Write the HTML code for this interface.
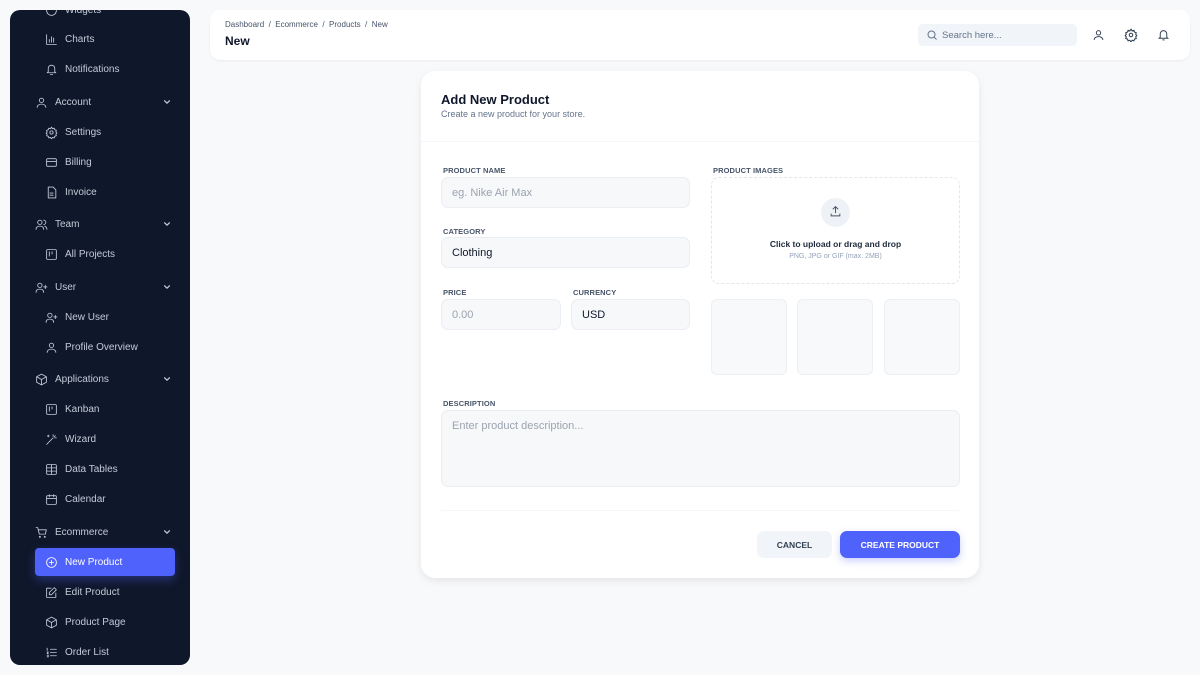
<!DOCTYPE html>
<html><head><style>
*{box-sizing:border-box;margin:0;padding:0}
body{width:1200px;height:675px;background:#f8f9fb;font-family:"Liberation Sans",sans-serif;position:relative;overflow:hidden}
.sb{position:absolute;left:10px;top:10px;width:180px;height:655px;background:#0f172a;border-radius:10px;overflow:hidden}
.it{position:absolute;height:26px;font-size:10px;color:#c3cbd8;display:flex;align-items:center}
.it svg{width:13px;height:13px;stroke:#c3cbd8;fill:none;stroke-width:1.6;stroke-linecap:round;stroke-linejoin:round;position:absolute;left:0}
.p{left:25px;width:140px}.p span{margin-left:20px}
.c{left:35px;width:140px}.c span{margin-left:20px}
.c svg{left:0}
.it svg.chev{left:auto;right:4px;width:8px;height:8px}
.act{background:#4f62fc;border-radius:4px;color:#fff;left:25px;width:140px;box-shadow:0 4px 10px rgba(79,98,252,.35)}
.act svg{left:10px;stroke:#fff}.act span{margin-left:30px}
.hd{position:absolute;left:210px;top:10px;width:980px;height:50px;background:#fff;border-radius:10px;box-shadow:0 1px 2px rgba(0,0,0,.06)}
.card{position:absolute;left:421px;top:71px;width:558px;height:507px;background:#fff;border-radius:14px;box-shadow:0 3px 8px rgba(0,0,0,.08)}
.lbl{position:absolute;font-size:7.5px;font-weight:bold;color:#475569;letter-spacing:.1px}
.inp{position:absolute;background:#f6f8fa;border:1px solid #eaedf2;border-radius:7px;font-size:11px;display:flex;align-items:center;padding-left:10px;color:#0f172a}
.ph{color:#9ca3af}
.th{position:absolute;width:76px;height:76px;background:#f8f9fb;border:1px solid #eceff3;border-radius:6px}
</style></head><body>
<div class="sb">
<div class="it c" style="top:-13px"><svg viewBox="0 0 24 24"><circle cx="12" cy="12" r="9"/></svg><span>Widgets</span></div>
<div class="it c" style="top:16px"><svg viewBox="0 0 24 24"><path d="M3 3v18h18M8 17v-5M12 17V7M16 17v-8"/></svg><span>Charts</span></div>
<div class="it c" style="top:46px"><svg viewBox="0 0 24 24"><path d="M6 16V10a6 6 0 0112 0v6l2 2H4zM10 21h4"/></svg><span>Notifications</span></div>
<div class="it p" style="top:79px"><svg viewBox="0 0 24 24"><circle cx="12" cy="8" r="4"/><path d="M4 21c0-4 4-6 8-6s8 2 8 6"/></svg><span>Account</span><svg class="chev" viewBox="0 0 10 10"><path d="M2 3.5l3 3 3-3"/></svg></div>
<div class="it c" style="top:109px"><svg viewBox="0 0 24 24"><circle cx="12" cy="12" r="3"/><path d="M12 2l2 3 3-1 1 3 3 1-1 3 2 2-2 2 1 3-3 1-1 3-3-1-2 3-2-3-3 1-1-3-3-1 1-3-2-2 2-2-1-3 3-1 1-3 3 1z"/></svg><span>Settings</span></div>
<div class="it c" style="top:139px"><svg viewBox="0 0 24 24"><rect x="3" y="5" width="18" height="14" rx="2"/><path d="M3 10h18"/></svg><span>Billing</span></div>
<div class="it c" style="top:169px"><svg viewBox="0 0 24 24"><path d="M6 2h9l5 5v15H6zM9 13h6M9 17h6"/></svg><span>Invoice</span></div>
<div class="it p" style="top:201px"><svg viewBox="0 0 24 24"><circle cx="9" cy="8" r="4"/><path d="M2 21c0-4 3-6 7-6s7 2 7 6M16 4a4 4 0 010 8M22 21c0-3-2-5-4-6"/></svg><span>Team</span><svg class="chev" viewBox="0 0 10 10"><path d="M2 3.5l3 3 3-3"/></svg></div>
<div class="it c" style="top:231px"><svg viewBox="0 0 24 24"><rect x="3" y="3" width="18" height="18" rx="2"/><path d="M8 7v8M13 7v4"/></svg><span>All Projects</span></div>
<div class="it p" style="top:264px"><svg viewBox="0 0 24 24"><circle cx="9" cy="8" r="4"/><path d="M2 21c0-4 3-6 7-6s7 2 7 6M19 8v6M16 11h6"/></svg><span>User</span><svg class="chev" viewBox="0 0 10 10"><path d="M2 3.5l3 3 3-3"/></svg></div>
<div class="it c" style="top:294px"><svg viewBox="0 0 24 24"><circle cx="9" cy="8" r="4"/><path d="M2 21c0-4 3-6 7-6s7 2 7 6M19 8v6M16 11h6"/></svg><span>New User</span></div>
<div class="it c" style="top:324px"><svg viewBox="0 0 24 24"><circle cx="12" cy="8" r="4"/><path d="M4 21c0-4 4-6 8-6s8 2 8 6"/></svg><span>Profile Overview</span></div>
<div class="it p" style="top:356px"><svg viewBox="0 0 24 24"><path d="M12 2l9 5v10l-9 5-9-5V7zM3 7l9 5 9-5M12 12v10"/></svg><span>Applications</span><svg class="chev" viewBox="0 0 10 10"><path d="M2 3.5l3 3 3-3"/></svg></div>
<div class="it c" style="top:386px"><svg viewBox="0 0 24 24"><rect x="3" y="3" width="18" height="18" rx="2"/><path d="M8 7v8M13 7v4"/></svg><span>Kanban</span></div>
<div class="it c" style="top:416px"><svg viewBox="0 0 24 24"><path d="M3 21L15 9M15 3v3M19 5l-2 2M21 9h-3M6 4v3M4.5 5.5h3"/></svg><span>Wizard</span></div>
<div class="it c" style="top:446px"><svg viewBox="0 0 24 24"><rect x="3" y="3" width="18" height="18" rx="2"/><path d="M3 9h18M3 15h18M12 3v18"/></svg><span>Data Tables</span></div>
<div class="it c" style="top:476px"><svg viewBox="0 0 24 24"><rect x="3" y="5" width="18" height="16" rx="2"/><path d="M3 10h18M8 3v4M16 3v4"/></svg><span>Calendar</span></div>
<div class="it p" style="top:509px"><svg viewBox="0 0 24 24"><path d="M2 3h3l3 12h11l2-8H6"/><circle cx="9" cy="20" r="1"/><circle cx="18" cy="20" r="1"/></svg><span>Ecommerce</span><svg class="chev" viewBox="0 0 10 10"><path d="M2 3.5l3 3 3-3"/></svg></div>
<div class="it act" style="top:538px;height:28px"><svg viewBox="0 0 24 24"><circle cx="12" cy="12" r="9"/><path d="M12 8v8M8 12h8"/></svg><span>New Product</span></div>
<div class="it c" style="top:569px"><svg viewBox="0 0 24 24"><path d="M20 13v8H3V4h8M17 3l4 4-9 9H8v-4z"/></svg><span>Edit Product</span></div>
<div class="it c" style="top:599px"><svg viewBox="0 0 24 24"><path d="M12 2l9 5v10l-9 5-9-5V7zM3 7l9 5 9-5M12 12v10"/></svg><span>Product Page</span></div>
<div class="it c" style="top:629px"><svg viewBox="0 0 24 24"><path d="M10 6h11M10 12h11M10 18h11M4 4v4M4 11h2l-2 3h2M4 17h2v3H4"/></svg><span>Order List</span></div>
</div>

<div class="hd">
<div style="position:absolute;left:15px;top:10px;font-size:8px;color:#475569">Dashboard &nbsp;/&nbsp; Ecommerce &nbsp;/&nbsp; Products &nbsp;/&nbsp; New</div>
<div style="position:absolute;left:15px;top:24px;font-size:12px;font-weight:bold;color:#0f172a">New</div>
<div style="position:absolute;left:708px;top:14px;width:159px;height:22px;background:#f1f4f8;border-radius:5px;font-size:9.5px;color:#64748b;display:flex;align-items:center;padding-left:24px">Search here...
<svg style="position:absolute;left:8px;top:5px" width="12" height="12" viewBox="0 0 24 24" fill="none" stroke="#64748b" stroke-width="2"><circle cx="11" cy="11" r="7"/><path d="M16 16l5 5"/></svg></div>
<svg style="position:absolute;left:882px;top:18px" width="13" height="14" viewBox="0 0 24 24" fill="none" stroke="#334155" stroke-width="1.8"><circle cx="12" cy="8" r="4"/><path d="M4 21c0-4 4-6 8-6s8 2 8 6"/></svg>
<svg style="position:absolute;left:914px;top:18px" width="14" height="14" viewBox="0 0 24 24" fill="none" stroke="#334155" stroke-width="1.8"><circle cx="12" cy="12" r="3"/><path d="M12 2l2 3 3-1 1 3 3 1-1 3 2 2-2 2 1 3-3 1-1 3-3-1-2 3-2-3-3 1-1-3-3-1 1-3-2-2 2-2-1-3 3-1 1-3 3 1z"/></svg>
<svg style="position:absolute;left:947px;top:18px" width="13" height="14" viewBox="0 0 24 24" fill="none" stroke="#334155" stroke-width="1.8"><path d="M6 16V10a6 6 0 0112 0v6l2 2H4zM10 21h4"/></svg>
</div>

<div class="card">
<div style="position:absolute;left:20px;top:21px;font-size:13px;font-weight:bold;color:#0f172a">Add New Product</div>
<div style="position:absolute;left:20px;top:38px;font-size:9px;color:#64748b">Create a new product for your store.</div>
<div style="position:absolute;left:0;right:0;top:70px;border-top:1px solid #f5f6f8"></div>
<div class="lbl" style="left:22px;top:95px">PRODUCT NAME</div>
<div class="inp ph" style="left:20px;top:106px;width:249px;height:31px">eg. Nike Air Max</div>
<div class="lbl" style="left:22px;top:156px">CATEGORY</div>
<div class="inp" style="left:20px;top:166px;width:249px;height:31px">Clothing</div>
<div class="lbl" style="left:22px;top:217px">PRICE</div>
<div class="inp ph" style="left:20px;top:228px;width:120px;height:31px">0.00</div>
<div class="lbl" style="left:152px;top:217px">CURRENCY</div>
<div class="inp" style="left:150px;top:228px;width:119px;height:31px">USD</div>
<div class="lbl" style="left:292px;top:95px">PRODUCT IMAGES</div>
<div style="position:absolute;left:290px;top:106px;width:249px;height:107px;border:1.5px dashed #e2e6ec;border-radius:8px">
<div style="position:absolute;left:109px;top:20px;width:29px;height:29px;border-radius:50%;background:#eef1f5"></div>
<svg style="position:absolute;left:117px;top:27px" width="13" height="13" viewBox="0 0 24 24" fill="none" stroke="#475569" stroke-width="1.8"><path d="M4 16v4h16v-4M12 3v12M7 8l5-5 5 5"/></svg>
<div style="position:absolute;left:0;right:0;top:61px;text-align:center;font-size:8.5px;font-weight:bold;color:#1e293b">Click to upload or drag and drop</div>
<div style="position:absolute;left:0;right:0;top:75px;text-align:center;font-size:7px;color:#94a3b8">PNG, JPG or GIF (max. 2MB)</div>
</div>
<div class="th" style="left:290px;top:228px"></div>
<div class="th" style="left:376px;top:228px"></div>
<div class="th" style="left:463px;top:228px"></div>
<div class="lbl" style="left:22px;top:328px">DESCRIPTION</div>
<div class="inp ph" style="left:20px;top:339px;width:519px;height:77px;align-items:flex-start;padding-top:9px">Enter product description...</div>
<div style="position:absolute;left:20px;right:20px;top:439px;border-top:1px solid #f5f6f8"></div>
<div style="position:absolute;left:336px;top:460px;width:75px;height:27px;background:#f1f4f8;border-radius:7px;font-size:8.5px;font-weight:bold;color:#334155;display:flex;align-items:center;justify-content:center">CANCEL</div>
<div style="position:absolute;left:419px;top:460px;width:120px;height:27px;background:#4f62fc;border-radius:7px;font-size:8.5px;font-weight:bold;color:#fff;display:flex;align-items:center;justify-content:center;box-shadow:0 3px 8px rgba(79,98,252,.3)">CREATE PRODUCT</div>
</div>
</body></html>
